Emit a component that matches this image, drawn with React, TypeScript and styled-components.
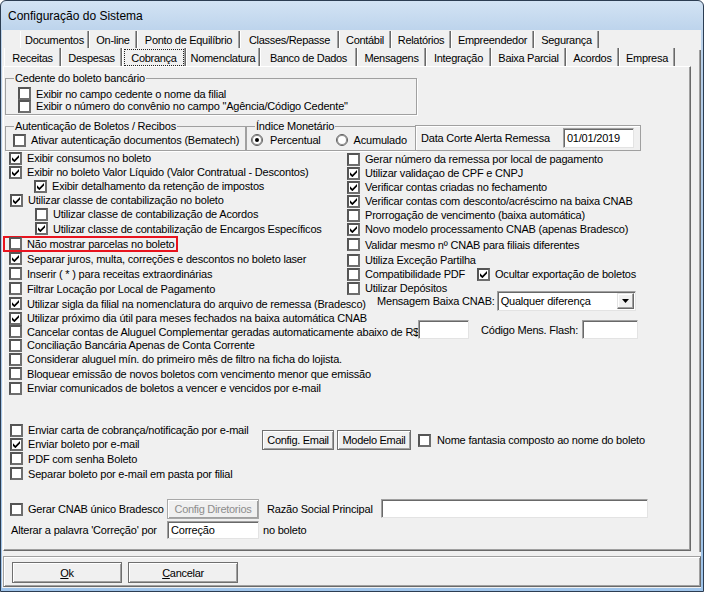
import React from 'react';
import styled, { createGlobalStyle } from 'styled-components';

const GlobalStyle = createGlobalStyle`
  html, body {
    margin: 0;
    padding: 0;
    background: #ffffff;
  }
  * {
    box-sizing: border-box;
  }
`;

const Frame = styled.div`
  width: 704px;
  height: 592px;
  border: 1px solid #2c3d52;
  border-radius: 6px 6px 0 0;
  background: linear-gradient(180deg, #d3e3f4 0px, #bdd4ec 29px, #b4cde8 80px, #9fc4ea 100%);
  display: flex;
  flex-direction: column;
  overflow: hidden;
  font-family: "Liberation Sans", Arial, sans-serif;
`;

const TitleBar = styled.div`
  height: 29px;
  flex: none;
  display: flex;
  align-items: center;
  padding-left: 7px;
  font-size: 12px;
  color: #000;
`;

const Client = styled.div`
  flex: 1;
  margin: 0 2px 3px 1px;
  padding-left: 1px;
  background: #f0f0f0;
  display: flex;
  flex-direction: column;
  font-size: 11px;
  letter-spacing: -0.2px;
  color: #000;
`;

const TabRow = styled.div<{ $h: number; $left: number; $top?: number }>`
  display: flex;
  height: ${(p) => p.$h}px;
  margin-left: ${(p) => p.$left}px;
  margin-top: ${(p) => p.$top ?? 0}px;
  flex: none;
`;

const Tab = styled.div<{ $w: number }>`
  width: ${(p) => p.$w}px;
  display: flex;
  align-items: center;
  justify-content: center;
  padding-top: 1px;
  border-left: 1px solid #ffffff;
  border-right: 1px solid #696969;
  box-shadow: inset -1px 0 0 #a0a0a0;
  white-space: nowrap;
  letter-spacing: -0.3px;
`;

const FocusRect = styled.span`
  flex: 1;
  align-self: stretch;
  margin: 0 1px;
  border: 1px dotted #202020;
  display: flex;
  align-items: center;
  justify-content: center;
`;

const TabArea = styled.div`
  display: flex;
  height: 504px;
  flex: none;
`;

const TabColumn = styled.div`
  width: 688px;
  display: flex;
  flex-direction: column;
`;

const Gutter = styled.div`
  flex: 1;
  margin-top: 2px;
  border-right: 1px solid #696969;
  box-shadow: inset -1px 0 0 #a0a0a0;
`;

const Panel = styled.div`
  height: 485px;
  border: 1px solid;
  border-color: #ffffff #696969 #696969 #ffffff;
  box-shadow: inset -1px -1px 0 #a0a0a0;
  padding: 5px 0 0 1px;
  display: flex;
  flex-direction: column;
`;

const Group = styled.fieldset<{ $w: number; $h: number }>`
  margin: 0;
  padding: 0;
  width: ${(p) => p.$w}px;
  height: ${(p) => p.$h}px;
  border: 1px solid #a0a0a0;
  box-shadow: 1px 1px 0 #ffffff;
  flex: none;
`;

const Caption = styled.legend<{ $left: number }>`
  margin-left: ${(p) => p.$left}px;
  padding: 0 1px;
  line-height: 13px;
  white-space: nowrap;
`;

const FlexRow = styled.div<{ $top?: number; $h?: number }>`
  display: flex;
  align-items: flex-start;
  margin-top: ${(p) => p.$top ?? 0}px;
  ${(p) => (p.$h ? `height: ${p.$h}px;` : '')}
  flex: none;
`;

const DataPanel = styled.div`
  width: 226px;
  height: 26px;
  margin-top: 5px;
  margin-left: -1px;
  border: 1px solid #a0a0a0;
  box-shadow: inset 1px 1px 0 #ffffff;
  display: flex;
  align-items: center;
  padding-left: 5px;
  white-space: nowrap;
`;

const Spacer = styled.span<{ $w: number }>`
  display: inline-block;
  width: ${(p) => p.$w}px;
  flex: none;
`;

const TextBox = styled.div<{ $w: number; $h: number }>`
  width: ${(p) => p.$w}px;
  height: ${(p) => p.$h}px;
  flex: none;
  background: #ffffff;
  border: 1px solid;
  border-color: #a0a0a0 #e3e3e3 #e3e3e3 #a0a0a0;
  box-shadow: inset 1px 1px 0 #696969;
  display: flex;
  align-items: center;
  padding-left: 3px;
  white-space: nowrap;
`;

const Columns = styled.div`
  display: grid;
  grid-template-columns: 342px 1fr;
  flex: none;
`;

const Column = styled.div<{ $top?: number }>`
  display: flex;
  flex-direction: column;
  margin-top: ${(p) => p.$top ?? 0}px;
  min-width: 0;
`;

const Row = styled.div<{ $h: number; $indent?: number; $top?: number }>`
  display: flex;
  align-items: center;
  height: ${(p) => p.$h}px;
  padding-left: ${(p) => p.$indent ?? 0}px;
  margin-top: ${(p) => p.$top ?? 0}px;
  white-space: nowrap;
  flex: none;
`;

const Box = styled.span`
  flex: none;
  width: 13px;
  height: 13px;
  border: 2px solid;
  border-color: #555555 #6e6e6e #6e6e6e #555555;
  background: #ffffff;
  display: inline-flex;
  align-items: center;
  justify-content: center;
`;

const Text = styled.span`
  margin-left: 5px;
`;

const Highlight = styled.span`
  display: inline-flex;
  align-items: center;
  height: 16px;
  margin-left: -2px;
  padding: 0 2px 0 4px;
  border: 2px solid #e8131e;
`;

const RadioDot = styled.span`
  flex: none;
  width: 12px;
  height: 12px;
  border-radius: 50%;
  border: 1px solid #5f5f5f;
  box-shadow: inset 0 0 0 1px #8a8a8a;
  background: #ffffff;
  display: inline-flex;
  align-items: center;
  justify-content: center;
  &::after {
    content: '';
    width: 4px;
    height: 4px;
    border-radius: 50%;
    background: ${(p: { $on?: boolean }) => (p.$on ? '#000' : 'transparent')};
  }
`;

const Combo = styled.div`
  width: 139px;
  height: 20px;
  flex: none;
  background: #ffffff;
  border: 1px solid;
  border-color: #a0a0a0 #e3e3e3 #e3e3e3 #a0a0a0;
  box-shadow: inset 1px 1px 0 #696969;
  display: flex;
  align-items: center;
  padding: 1px 1px 1px 3px;
`;

const ComboValue = styled.span`
  flex: 1;
  white-space: nowrap;
`;

const ComboButton = styled.span`
  width: 17px;
  height: 16px;
  background: #f0f0f0;
  border: 1px solid;
  border-color: #e3e3e3 #696969 #696969 #e3e3e3;
  box-shadow: inset -1px -1px 0 #a0a0a0, inset 1px 1px 0 #ffffff;
  display: flex;
  align-items: center;
  justify-content: center;
`;

const Button = styled.div<{ $w: number; $h: number; $disabled?: boolean }>`
  width: ${(p) => p.$w}px;
  height: ${(p) => p.$h}px;
  flex: none;
  border: 1px solid #6f6f6f;
  box-shadow: inset 1px 1px 0 #ffffff, inset -1px -1px 0 #a0a0a0;
  background: #f0f0f0;
  display: flex;
  align-items: center;
  justify-content: center;
  white-space: nowrap;
  letter-spacing: -0.3px;
  color: ${(p) => (p.$disabled ? '#8d8d8d' : '#000')};
  ${(p) => (p.$disabled ? 'border-color: #a8a8a8;' : '')}
`;

const Cell = styled.div<{ $w: number; $indent?: number }>`
  width: ${(p) => p.$w}px;
  flex: none;
  display: flex;
  align-items: center;
  padding-left: ${(p) => p.$indent ?? 0}px;
  white-space: nowrap;
  align-self: stretch;
`;

const BottomBar = styled.div`
  height: 31px;
  margin-top: 4px;
  border: 1px solid;
  border-color: #a0a0a0 #696969 #696969 #a0a0a0;
  box-shadow: inset 1px 1px 0 #ffffff, inset -1px -1px 0 #a0a0a0;
  display: flex;
  gap: 6px;
  padding: 5px 0 0 8px;
  flex: none;
`;

const CheckMark = () => (
  <svg width="7" height="7" viewBox="0 0 7 7">
    <polygon points="0,2.3 2.4,4.7 7,0.1 7,2.6 2.4,7.2 0,4.9" fill="#000" />
  </svg>
);

const CheckBox = ({ checked }: { checked?: boolean }) => <Box>{checked && <CheckMark />}</Box>;

type OptionProps = {
  h: number;
  indent?: number;
  top?: number;
  checked?: boolean;
  children: React.ReactNode;
};

const Option = ({ h, indent, top, checked, children }: OptionProps) => (
  <Row $h={h} $indent={indent} $top={top}>
    <CheckBox checked={checked} />
    <Text>{children}</Text>
  </Row>
);

const tabsBack = [
  { label: 'Documentos', w: 69 },
  { label: 'On-line', w: 48 },
  { label: 'Ponto de Equilíbrio', w: 103 },
  { label: 'Classes/Repasse', w: 99 },
  { label: 'Contábil', w: 52 },
  { label: 'Relatórios', w: 60 },
  { label: 'Empreendedor', w: 83 },
  { label: 'Segurança', w: 65 },
];

const tabsFront = [
  { label: 'Receitas', w: 57 },
  { label: 'Despesas', w: 61 },
  { label: 'Cobrança', w: 64, active: true },
  { label: 'Nomenclatura', w: 74 },
  { label: 'Banco de Dados', w: 97 },
  { label: 'Mensagens', w: 69 },
  { label: 'Integração', w: 65 },
  { label: 'Baixa Parcial', w: 75 },
  { label: 'Acordos', w: 53 },
  { label: 'Empresa', w: 56 },
];

const TriangleDown = () => (
  <svg width="7" height="4" viewBox="0 0 7 4">
    <polygon points="0,0 7,0 3.5,4" fill="#000" />
  </svg>
);

export default function App() {
  return (
    <>
      <GlobalStyle />
      <Frame>
        <TitleBar>Configuração do Sistema</TitleBar>
        <Client>
          <TabRow $h={17} $left={17} $top={1}>
            {tabsBack.map((t) => (
              <Tab key={t.label} $w={t.w}>
                {t.label}
              </Tab>
            ))}
          </TabRow>
          <TabArea>
            <TabColumn>
              <TabRow $h={18} $left={1}>
                {tabsFront.map((t) => (
                  <Tab key={t.label} $w={t.w}>
                    {t.active ? <FocusRect>{t.label}</FocusRect> : t.label}
                  </Tab>
                ))}
              </TabRow>
              <Panel>
                <Group $w={412} $h={43}>
                  <Caption $left={8}>Cedente do boleto bancário</Caption>
                  <Option h={13} indent={12} top={2}>
                    Exibir no campo cedente o nome da filial
                  </Option>
                  <Option h={12} indent={12}>
                    Exibir o número do convênio no campo "Agência/Código Cedente"
                  </Option>
                </Group>

                <FlexRow $top={5}>
                  <Group $w={241} $h={31}>
                    <Caption $left={8}>Autenticação de Boletos / Recibos</Caption>
                    <Option h={14} indent={7}>
                      Ativar autenticação documentos (Bematech)
                    </Option>
                  </Group>
                  <Group $w={170} $h={31}>
                    <Caption $left={8}>Índice Monetário</Caption>
                    <Row $h={14} $indent={4}>
                      <RadioDot $on />
                      <Text style={{ marginLeft: 7 }}>Percentual</Text>
                      <Spacer $w={15} />
                      <RadioDot />
                      <Text style={{ marginLeft: 6 }}>Acumulado</Text>
                    </Row>
                  </Group>
                  <DataPanel>
                    <span>Data Corte Alerta Remessa</span>
                    <Spacer $w={13} />
                    <TextBox $w={71} $h={20}>
                      01/01/2019
                    </TextBox>
                  </DataPanel>
                </FlexRow>

                <Columns>
                  <Column>
                    <Option h={14} indent={4} checked>
                      Exibir consumos no boleto
                    </Option>
                    <Option h={14} indent={4} checked>
                      Exibir no boleto Valor Líquido (Valor Contratual - Descontos)
                    </Option>
                    <Option h={14} indent={29} checked>
                      Exibir detalhamento da retenção de impostos
                    </Option>
                    <Option h={14} indent={5} checked>
                      Utilizar classe de contabilização no boleto
                    </Option>
                    <Option h={14} indent={30}>
                      Utilizar classe de contabilização de Acordos
                    </Option>
                    <Option h={15} indent={30} checked>
                      Utilizar classe de contabilização de Encargos Específicos
                    </Option>
                    <Row $h={15}>
                      <Highlight>
                        <CheckBox />
                        <Text>Não mostrar parcelas no boleto</Text>
                      </Highlight>
                    </Row>
                    <Option h={15} indent={4} checked>
                      Separar juros, multa, correções e descontos no boleto laser
                    </Option>
                    <Option h={15} indent={4}>
                      Inserir ( * ) para receitas extraordinárias
                    </Option>
                    <Option h={15} indent={4}>
                      Filtrar Locação por Local de Pagamento
                    </Option>
                    <Option h={15} indent={4} checked>
                      Utilizar sigla da filial na nomenclatura do arquivo de remessa (Bradesco)
                    </Option>
                    <Option h={14} indent={4} checked>
                      Utilizar próximo dia útil para meses fechados na baixa automática CNAB
                    </Option>
                    <Row $h={13} $indent={4}>
                      <CheckBox />
                      <Text>Cancelar contas de Aluguel Complementar geradas automaticamente abaixo de R$</Text>
                      <TextBox $w={51} $h={19} style={{ marginTop: -4, marginLeft: -1 }} />
                    </Row>
                    <Option h={14} indent={4}>
                      Conciliação Bancária Apenas de Conta Corrente
                    </Option>
                    <Option h={14} indent={4}>
                      Considerar aluguel mín. do primeiro mês de filtro na ficha do lojista.
                    </Option>
                    <Option h={15} indent={4}>
                      Bloquear emissão de novos boletos com vencimento menor que emissão
                    </Option>
                    <Option h={14} indent={4}>
                      Enviar comunicados de boletos a vencer e vencidos por e-mail
                    </Option>
                  </Column>

                  <Column $top={1}>
                    <Option h={14}>Gerar número da remessa por local de pagamento</Option>
                    <Option h={14} checked>
                      Utilizar validaçao de CPF e CNPJ
                    </Option>
                    <Option h={14} checked>
                      Verificar contas criadas no fechamento
                    </Option>
                    <Option h={14} checked>
                      Verificar contas com desconto/acréscimo na baixa CNAB
                    </Option>
                    <Option h={14}>Prorrogação de vencimento (baixa automática)</Option>
                    <Option h={14} checked>
                      Novo modelo processamento CNAB (apenas Bradesco)
                    </Option>
                    <Option h={17}>Validar mesmo nº CNAB para filiais diferentes</Option>
                    <Option h={14}>Utiliza Exceção Partilha</Option>
                    <Row $h={14}>
                      <Cell $w={130}>
                        <CheckBox />
                        <Text>Compatibilidade PDF</Text>
                      </Cell>
                      <CheckBox checked />
                      <Text>Ocultar exportação de boletos</Text>
                    </Row>
                    <Option h={14}>Utilizar Depósitos</Option>
                    <Row $h={20} $indent={30} $top={-4}>
                      <span>Mensagem Baixa CNAB:</span>
                      <Spacer $w={2} />
                      <Combo>
                        <ComboValue>Qualquer diferença</ComboValue>
                        <ComboButton>
                          <TriangleDown />
                        </ComboButton>
                      </Combo>
                    </Row>
                    <Row $h={19} $indent={134} $top={9}>
                      <span>Código Mens. Flash:</span>
                      <Spacer $w={4} />
                      <TextBox $w={56} $h={19} />
                    </Row>
                  </Column>
                </Columns>

                <FlexRow $top={28}>
                  <Column style={{ width: 257 }}>
                    <Option h={14} indent={5}>
                      Enviar carta de cobrança/notificação por e-mail
                    </Option>
                    <Option h={14} indent={5} checked>
                      Enviar boleto por e-mail
                    </Option>
                    <Option h={15} indent={5}>
                      PDF com senha Boleto
                    </Option>
                    <Option h={15} indent={5}>
                      Separar boleto por e-mail em pasta por filial
                    </Option>
                  </Column>
                  <FlexRow $top={7}>
                    <Button $w={72} $h={20}>
                      Config. Email
                    </Button>
                    <Spacer $w={3} />
                    <Button $w={74} $h={20}>
                      Modelo Email
                    </Button>
                    <Row $h={20} $indent={7}>
                      <CheckBox />
                      <Text style={{ marginLeft: 6 }}>Nome fantasia composto ao nome do boleto</Text>
                    </Row>
                  </FlexRow>
                </FlexRow>

                <FlexRow $top={18} $h={20}>
                  <Cell $w={162} $indent={5}>
                    <CheckBox />
                    <Text>Gerar CNAB único Bradesco</Text>
                  </Cell>
                  <Button $w={92} $h={20} $disabled>
                    Config Diretorios
                  </Button>
                  <Cell $w={122} $indent={8}>
                    Razão Social Principal
                  </Cell>
                  <TextBox $w={267} $h={19} />
                </FlexRow>

                <FlexRow $top={2} $h={18}>
                  <Cell $w={162} $indent={6}>
                    Alterar a palavra 'Correção' por
                  </Cell>
                  <TextBox $w={92} $h={18}>
                    Correção
                  </TextBox>
                  <Cell $w={80} $indent={4}>
                    no boleto
                  </Cell>
                </FlexRow>
              </Panel>
            </TabColumn>
            <Gutter />
          </TabArea>
          <BottomBar>
            <Button $w={110} $h={21}>
              <u>O</u>k
            </Button>
            <Button $w={110} $h={21}>
              <u>C</u>ancelar
            </Button>
          </BottomBar>
        </Client>
      </Frame>
    </>
  );
}
